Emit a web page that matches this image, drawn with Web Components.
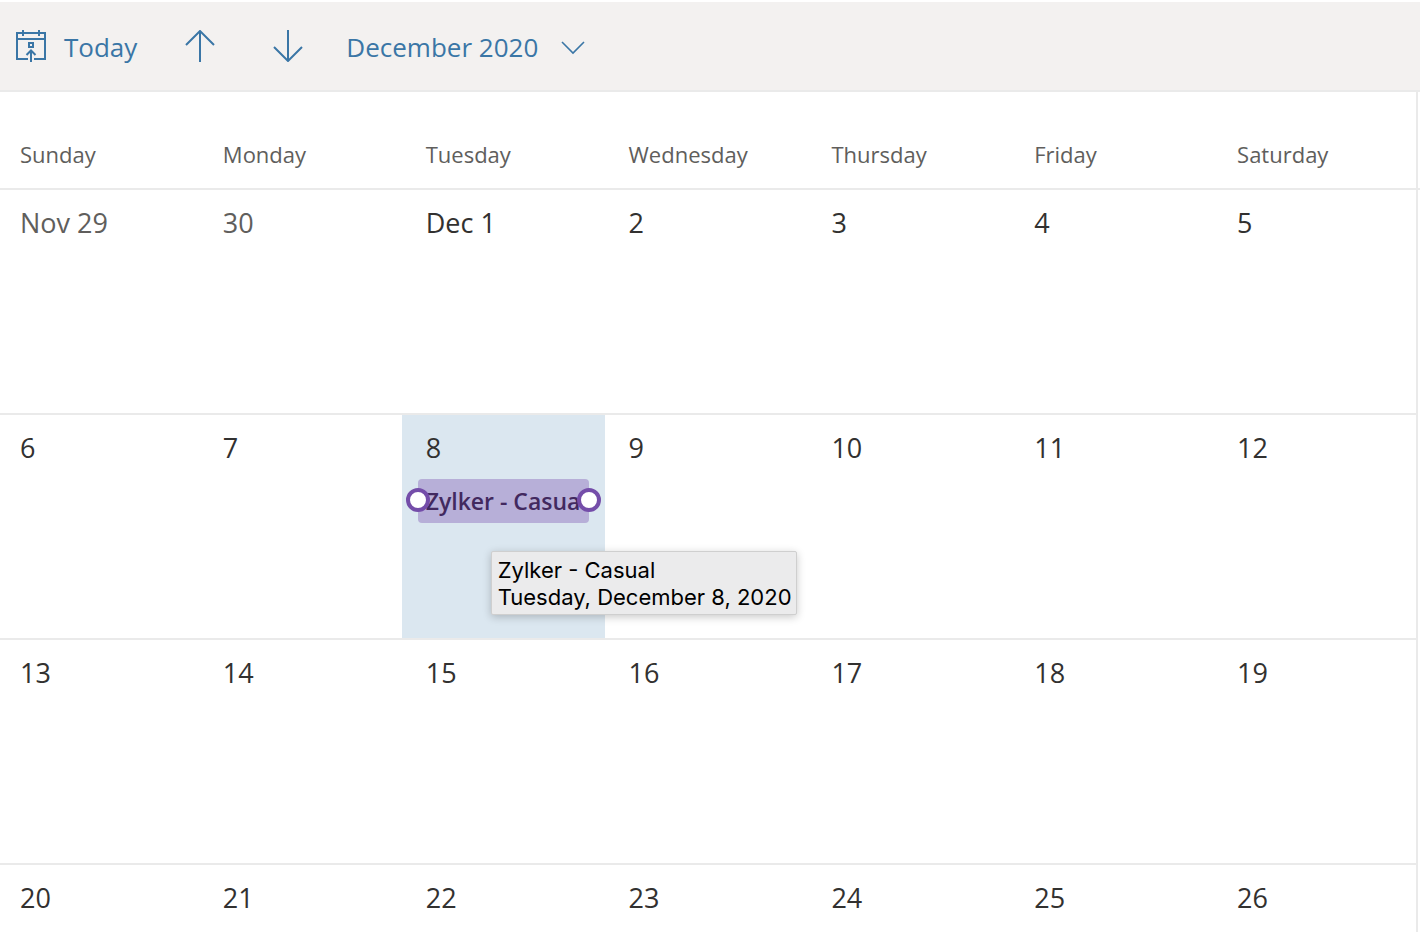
<!DOCTYPE html>
<html lang="en">
<head>
<meta charset="utf-8">
<title>Calendar</title>
<style>
  body {
    margin: 0;
    background: #fff;
    color: #323130;
    font-family: "Open Sans", "Noto Sans", sans-serif;
    --line: #eaeaea;
    --accent: #3a76a6;
  }
</style>
</head>
<body>
<calendar-app></calendar-app>

<script>
class BaseElement extends HTMLElement {
  constructor() {
    super();
    this.attachShadow({ mode: "open" }).innerHTML = this.render();
  }
}

class ToolButton extends BaseElement {
  render() {
    return `
      <style>
        :host { display: block; }
        button {
          display: flex; align-items: center; gap: 18px;
          height: 88px; margin: 0; padding: 0; border: 0; background: none;
          color: var(--accent); font: inherit; font-size: 26px; line-height: 36px;
          white-space: nowrap; cursor: pointer;
        }
      </style>
      <button type="button" aria-label="${this.getAttribute("label")}"><slot></slot></button>`;
  }
}
customElements.define("tool-button", ToolButton);

class CalendarToolbar extends BaseElement {
  render() {
    return `
      <style>
        :host {
          display: flex; align-items: center;
          margin-top: 2px; padding-left: 16px;
          background: #f3f1f0; border-bottom: 2px solid var(--line);
        }
        svg { display: block; flex: none; fill: none; stroke: currentColor; stroke-width: 2; }
        span { padding-top: 2px; }
        .previous { margin-left: 48px; }
        .next { margin-left: 58px; }
        .month { margin-left: 43px; }
        .chevron { padding: 4px 0 0 4px; }
      </style>
      <tool-button label="Today">
        <svg width="30" height="32" viewBox="0 0 30 32" aria-hidden="true">
          <path d="M12 29H1V3H29V29H18M1 9H29M7 0V6M23 0V6M15 32V21M10.500 25L15 20.500L19.500 25M13 13H17V17H13Z"/>
        </svg>
        <span>Today</span>
      </tool-button>
      <tool-button class="previous" label="Previous month">
        <svg width="30" height="32" viewBox="0 0 30 32" aria-hidden="true"><path d="M15 32V1M1 15L15 1L29 15"/></svg>
      </tool-button>
      <tool-button class="next" label="Next month">
        <svg width="30" height="32" viewBox="0 0 30 32" aria-hidden="true"><path d="M15 0V31M1 17L15 31L29 17"/></svg>
      </tool-button>
      <tool-button class="month" label="December 2020">
        <span>December 2020</span>
        <svg class="chevron" width="26" height="14" viewBox="0 0 26 14" aria-hidden="true" style="stroke-width:1.600"><path d="M2 1L13 12L24 1"/></svg>
      </tool-button>`;
  }
}
customElements.define("calendar-toolbar", CalendarToolbar);

class EventTooltip extends BaseElement {
  render() {
    return `
      <style>
        :host {
          display: block; box-sizing: border-box; padding: 5px 4px 3px 6px;
          background: #ebebec; border: 1px solid #cfcfcf; border-radius: 2px;
          box-shadow: 0 2px 8px rgba(0, 0, 0, .22);
          color: #000; font: 22px/27px Inter, sans-serif; white-space: nowrap;
        }
      </style>
      <slot></slot>`;
  }
}
customElements.define("event-tooltip", EventTooltip);

class CalendarEvent extends BaseElement {
  render() {
    return `
      <style>
        :host { display: block; position: relative; margin: 0 16px; }
        button {
          display: block; box-sizing: border-box; width: 100%; height: 44px;
          margin: 0; padding: 0 8px; border: 0; border-radius: 4px;
          background: #b7afd8; color: #42295f;
          font: inherit; font-size: 23px; font-weight: 600; line-height: 44px;
          text-align: left; white-space: nowrap; overflow: hidden; cursor: pointer;
        }
        .handle {
          position: absolute; top: 9px; box-sizing: border-box; width: 24px; height: 24px;
          border: 4px solid #744da9; border-radius: 50%; background: #fff;
        }
        .start { left: -12px; }
        .end { right: -12px; }
        ::slotted(event-tooltip) { position: absolute; z-index: 1; left: 73px; top: 72px; }
      </style>
      <button type="button">${this.getAttribute("name")}</button>
      <span class="handle start"></span>
      <span class="handle end"></span>
      <slot></slot>`;
  }
}
customElements.define("calendar-event", CalendarEvent);

class MonthGrid extends BaseElement {
  render() {
    const names = ["Sunday", "Monday", "Tuesday", "Wednesday", "Thursday", "Friday", "Saturday"];
    const weeks = [["Nov 29", "30", "Dec 1", "2", "3", "4", "5"]];
    for (let first = 6; first <= 20; first += 7) {
      weeks.push(names.map((_, i) => String(first + i)));
    }
    const cell = (day, week, column) => {
      const kind = week === 0 && column < 2 ? "other" : day === "8" ? "selected" : "";
      const event = day === "8" ? `
        <calendar-event name="Zylker - Casual">
          <event-tooltip role="tooltip">
            <div>Zylker - Casual</div>
            <div>Tuesday, December 8, 2020</div>
          </event-tooltip>
        </calendar-event>` : "";
      return `<td class="${kind}"><div class="day">${day}</div>${event}</td>`;
    };
    return `
      <style>
        :host { display: block; padding-right: 2px; }
        .frame { margin-left: -4px; border-right: 2px solid var(--line); }
        table { width: 100%; table-layout: fixed; border-collapse: separate; border-spacing: 0; }
        th, td { padding: 0; text-align: left; vertical-align: top; border-bottom: 2px solid var(--line); }
        th {
          height: 96px; box-sizing: content-box; padding-left: 24px; color: #605e5c;
          font-size: 22px; font-weight: 400; line-height: 32px;
        }
        th span { display: block; padding-top: 46px; }
        /* carries the header rule across the frame to the window edge */
        th:last-child { position: relative; }
        th:last-child::after {
          content: ""; position: absolute; left: 100%; top: 100%;
          width: 4px; height: 2px; background: var(--line);
        }
        td { height: 223px; }
        .day { padding: 15px 24px 13px; font-size: 27px; line-height: 36px; }
        .other { color: #605e5c; }
        .selected { background: #dbe7f0; }
      </style>
      <div class="frame">
        <table>
          <thead><tr>${names.map(n => `<th scope="col"><span>${n}</span></th>`).join("")}</tr></thead>
          <tbody>${weeks.map((w, r) => `<tr>${w.map((d, c) => cell(d, r, c)).join("")}</tr>`).join("")}</tbody>
        </table>
      </div>`;
  }
}
customElements.define("month-grid", MonthGrid);

class CalendarApp extends BaseElement {
  render() {
    return `
      <style>
        :host { display: flex; flex-direction: column; height: 100vh; overflow: hidden; }
        calendar-toolbar, month-grid { flex: none; }
      </style>
      <calendar-toolbar></calendar-toolbar>
      <month-grid></month-grid>`;
  }
}
customElements.define("calendar-app", CalendarApp);
</script>
</body>
</html>
